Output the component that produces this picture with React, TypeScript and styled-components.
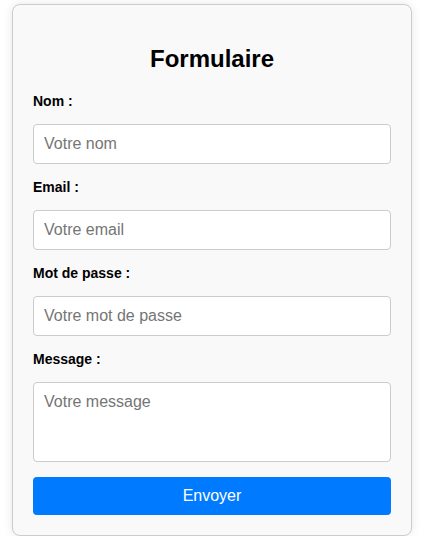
import styled, { createGlobalStyle } from 'styled-components';

const GlobalStyle = createGlobalStyle`
  html, body {
    margin: 0;
    padding: 0;
    background: #ffffff;
    font-family: "Liberation Sans", Arial, sans-serif;
  }
  * {
    box-sizing: border-box;
  }
`;

const Page = styled.div`
  padding: 4px 0 0 12px;
`;

const Card = styled.form`
  width: 400px;
  padding: 20px;
  background: #f9f9f9;
  border: 1px solid #ccc;
  border-radius: 8px;
  box-shadow: 0 0 10px rgba(0, 0, 0, 0.1);
  display: flex;
  flex-direction: column;
`;

const Title = styled.h2`
  margin: 20px 0;
  font-size: 24px;
  line-height: 28px;
  font-weight: 700;
  text-align: center;
  color: #000;
`;

const Label = styled.label`
  display: block;
  font-size: 14px;
  line-height: 16px;
  font-weight: 700;
  color: #000;
  margin-bottom: 15px;
`;

const fieldStyles = `
  width: 100%;
  padding: 10px;
  font-family: "Liberation Sans", Arial, sans-serif;
  font-size: 16px;
  color: #000;
  background: #fff;
  border: 1px solid #ccc;
  border-radius: 4px;
  outline: none;
  margin: 0 0 15px;

  &::placeholder {
    color: #757575;
  }
`;

const Input = styled.input`
  ${fieldStyles}
  height: 40px;
`;

const TextArea = styled.textarea`
  ${fieldStyles}
  height: 80px;
  resize: none;
  display: block;
`;

const Submit = styled.button`
  width: 100%;
  height: 38px;
  border: none;
  border-radius: 4px;
  background: #007bff;
  color: #fff;
  font-family: "Liberation Sans", Arial, sans-serif;
  font-size: 16px;
  cursor: pointer;
`;

const fields = [
  { id: 'nom', label: 'Nom :', type: 'text', placeholder: 'Votre nom' },
  { id: 'email', label: 'Email :', type: 'email', placeholder: 'Votre email' },
  { id: 'password', label: 'Mot de passe :', type: 'password', placeholder: 'Votre mot de passe' },
];

export default function App() {
  return (
    <>
      <GlobalStyle />
      <Page>
        <Card onSubmit={(e) => e.preventDefault()}>
          <Title>Formulaire</Title>
          {fields.map((f) => (
            <div key={f.id}>
              <Label htmlFor={f.id}>{f.label}</Label>
              <Input id={f.id} type={f.type} placeholder={f.placeholder} />
            </div>
          ))}
          <Label htmlFor="message">Message :</Label>
          <TextArea id="message" placeholder="Votre message" />
          <Submit type="submit">Envoyer</Submit>
        </Card>
      </Page>
    </>
  );
}
